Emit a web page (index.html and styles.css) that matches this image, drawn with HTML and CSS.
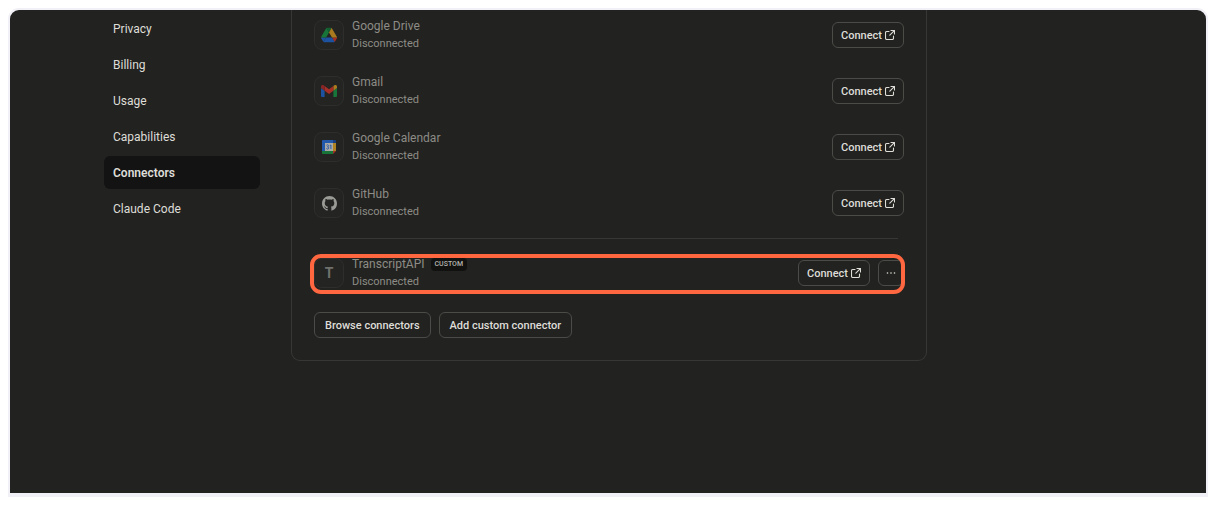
FILE: index.html
```html
<!DOCTYPE html>
<html lang="en">
<head>
<meta charset="UTF-8" />
<meta name="viewport" content="width=device-width, initial-scale=1" />
<title>Connectors</title>
<link rel="stylesheet" href="styles.css">
</head>
<body>
<svg class="sprite" aria-hidden="true">
<symbol id="external" viewBox="1 1 10 10">
<path d="M5 2.5H2.8C2 2.5 1.5 3 1.5 3.8v5.4c0 .8.5 1.3 1.3 1.3h5.4c.8 0 1.3-.5 1.3-1.3V7M7 1.5h3.5V5M10.3 1.7 5.8 6.2" fill="none" stroke="currentColor" stroke-width="1.1" stroke-linecap="round" stroke-linejoin="round" />
</symbol>
</svg>
<div class="frame">
<div class="layout">
<nav class="sidebar" aria-label="Settings">
<a href="#privacy">Privacy</a>
<a href="#billing">Billing</a>
<a href="#usage">Usage</a>
<a href="#capabilities">Capabilities</a>
<a href="#connectors" class="active" aria-current="page">Connectors</a>
<a href="#claude-code">Claude Code</a>
</nav>
<main class="card">
<div class="connectors">
<div class="connector">
<div class="icon">
<svg width="16" height="16" viewBox="0 0 87 78" aria-hidden="true">
<path d="m6.6 66.85 3.85 6.65c.8 1.4 1.95 2.5 3.3 3.3l13.75-23.8H0c0 1.55.4 3.1 1.2 4.5z" fill="#1c52a0" />
<path d="M43.65 25 29.9 1.2c-1.35.8-2.5 1.9-3.3 3.3L1.2 48.5A9 9 0 0 0 0 53h27.5z" fill="#187539" />
<path d="M73.55 76.8c1.35-.8 2.5-1.9 3.3-3.3l9.25-16c.8-1.4 1.2-2.95 1.2-4.5H59.8l5.85 11.5z" fill="#a52f26" />
<path d="M43.65 25 57.4 1.2C56.05.4 54.5 0 52.9 0H34.4c-1.6 0-3.15.45-4.5 1.2z" fill="#126030" />
<path d="M59.8 53H27.5L13.75 76.8c1.35.8 2.9 1.2 4.5 1.2h50.8c1.6 0 3.15-.45 4.5-1.2z" fill="#1c52a0" />
<path d="m73.4 26.5-12.7-22c-.8-1.4-1.95-2.5-3.3-3.3L43.65 25 59.8 53h27.45c0-1.55-.4-3.1-1.2-4.5z" fill="#a97a1e" />
</svg>
</div>
<div class="info">
<div class="name">Google Drive</div>
<div class="status">Disconnected</div>
</div>
<button type="button">Connect <svg width="10" height="10" aria-hidden="true"><use href="#external" /></svg></button>
</div>
<div class="connector">
<div class="icon">
<svg width="16" height="16" viewBox="0 0 88 66" aria-hidden="true">
<path d="M6 66h14V32L0 17v43a6 6 0 0 0 6 6" fill="#1c52a0" />
<path d="M68 66h14a6 6 0 0 0 6-6V17L68 32" fill="#187539" />
<path d="M68 6v26l20-15V9c0-7.400-8.470-11.640-14.400-7.200" fill="#a97a1e" />
<path d="M20 32V6l24 18L68 6v26L44 50" fill="#a52f26" />
<path d="M0 9v8l20 15V6l-5.600-4.200C8.460-2.640 0 1.600 0 9" fill="#8a2525" />
</svg>
</div>
<div class="info">
<div class="name">Gmail</div>
<div class="status">Disconnected</div>
</div>
<button type="button">Connect <svg width="10" height="10" aria-hidden="true"><use href="#external" /></svg></button>
</div>
<div class="connector">
<div class="icon">
<svg width="16" height="16" viewBox="0 0 16 16" aria-hidden="true">
<path d="M2 1h10v3H4v8H1V2c0-.6.4-1 1-1" fill="#2259ab" />
<path d="M12 1h2c.6 0 1 .4 1 1v2h-3z" fill="#173f80" />
<path d="M12 4h3v8h-3z" fill="#b08322" />
<path d="M1 12h11v3H2c-.6 0-1-.4-1-1z" fill="#187539" />
<path d="M12 12h3l-3 3z" fill="#a52f26" />
<path d="M4 4h8v8H4z" fill="#a9a9a6" />
<path d="M5.500 6.300c.5-.8 2-.7 2 .4 0 .8-.6 1.100-1.100 1.100.6 0 1.300.3 1.300 1.200 0 1.300-1.800 1.400-2.400.4M8.800 6.700l1.100-.7v4" fill="none" stroke="#2259ab" stroke-width=".9" />
</svg>
</div>
<div class="info">
<div class="name">Google Calendar</div>
<div class="status">Disconnected</div>
</div>
<button type="button">Connect <svg width="10" height="10" aria-hidden="true"><use href="#external" /></svg></button>
</div>
<div class="connector">
<div class="icon">
<svg width="15" height="15" viewBox="0 0 16 16" aria-hidden="true">
<path d="M8 0C3.580 0 0 3.580 0 8c0 3.540 2.290 6.530 5.470 7.590.4.070.55-.17.55-.38 0-.19-.01-.82-.01-1.490-2.010.37-2.530-.49-2.690-.94-.09-.23-.48-.94-.82-1.130-.28-.15-.68-.52-.01-.53.63-.01 1.080.58 1.230.82.72 1.210 1.870.87 2.330.66.070-.52.28-.87.51-1.070-1.780-.2-3.640-.89-3.640-3.950 0-.87.31-1.590.82-2.150-.08-.2-.36-1.020.08-2.120 0 0 .67-.21 2.200.82.64-.18 1.320-.27 2-.27s1.360.09 2 .27c1.530-1.040 2.200-.82 2.200-.82.44 1.100.16 1.920.08 2.120.51.56.82 1.270.82 2.150 0 3.070-1.870 3.750-3.650 3.950.29.25.54.73.54 1.480 0 1.070-.01 1.930-.01 2.200 0 .21.15.46.55.38A8.010 8.010 0 0 0 16 8c0-4.420-3.580-8-8-8" fill="#9a9a97" />
</svg>
</div>
<div class="info">
<div class="name">GitHub</div>
<div class="status">Disconnected</div>
</div>
<button type="button">Connect <svg width="10" height="10" aria-hidden="true"><use href="#external" /></svg></button>
</div>
</div>
<hr>
<div class="connector highlight">
<div class="icon letter">T</div>
<div class="info">
<div class="name">TranscriptAPI <span class="badge">CUSTOM</span></div>
<div class="status">Disconnected</div>
</div>
<button type="button">Connect <svg width="10" height="10" aria-hidden="true"><use href="#external" /></svg></button>
<button type="button" class="more" aria-label="More options">
<svg width="10" height="10" viewBox="0 0 10 10" fill="currentColor" aria-hidden="true"><circle cx="1.500" cy="5" r=".8" /><circle cx="5" cy="5" r=".8" /><circle cx="8.500" cy="5" r=".8" /></svg>
</button>
</div>
<div class="actions">
<button type="button">Browse connectors</button>
<button type="button">Add custom connector</button>
</div>
</main>
</div>
</div>
</body>
</html>
```

FILE: styles.css
```css
:root {
--bg-color: #222220;
--active-bg: #131313;
--line: #373735;
--button-line: #4b4b48;
--text-color: #deddd8;
--muted: #8d8c86;
--accent: #ff6740;
--font-family: Roboto, "Liberation Sans", Arial, sans-serif;
}
* {
box-sizing: border-box;
}
body {
margin: 8px;
background: #fff;
color: var(--text-color);
font-family: var(--font-family);
font-size: 12px;
line-height: 18px;
}
.sprite {
display: none;
}
.frame {
min-height: calc(100vh - 16px);
background: var(--bg-color);
border: 2px solid #f1f0f6;
border-bottom-width: 4px;
border-radius: 11px 11px 0 0;
}
.layout {
max-width: 1008px;
margin: 0 auto;
display: grid;
grid-template-columns: 156px minmax(0, 636px);
gap: 31px;
align-items: start;
}
.sidebar {
display: grid;
gap: 3px;
padding-top: 2px;
}
.sidebar a {
padding: 8px 9px 7px;
border-radius: 6px;
color: inherit;
text-decoration: none;
}
.sidebar .active {
background: var(--active-bg);
font-weight: 600;
}
.card {
padding: 7px 22px 22px;
border: 1px solid var(--line);
border-top: none;
border-radius: 0 0 9px 9px;
}
.connectors {
display: grid;
gap: 20px;
}
.connector {
display: flex;
align-items: center;
gap: 8px;
}
.icon {
width: 30px;
height: 30px;
display: grid;
place-items: center;
background: #242422;
border: 1px solid #2e2e2c;
border-radius: 8px;
}
.letter {
color: #70706c;
font-size: 14px;
font-weight: 700;
}
.info {
flex: 1;
color: var(--muted);
}
.name {
display: flex;
align-items: center;
gap: 6px;
}
.status {
font-size: 11px;
}
.badge {
padding: 0 4px;
background: #111110;
border-radius: 4px;
color: #b5b4ae;
font-size: 7px;
font-weight: 500;
line-height: 13px;
}
button {
height: 26px;
display: flex;
align-items: center;
gap: 3px;
padding: 0 8px;
background: transparent;
border: 1px solid var(--button-line);
border-radius: 6px;
color: var(--text-color);
font-family: inherit;
font-size: 11px;
font-weight: 500;
cursor: pointer;
}
button:hover {
background: var(--active-bg);
}
hr {
margin: 17px 6px 16px;
border: none;
border-top: 1px solid var(--line);
}
.highlight {
position: relative;
}
.highlight::after {
content: "";
position: absolute;
inset: -1px -1px -3px -4px;
border: 4px solid var(--accent);
border-radius: 11px;
pointer-events: none;
}
.more {
width: 26px;
justify-content: center;
padding: 0;
}
.actions {
display: flex;
gap: 8px;
margin-top: 21px;
}
.actions button {
padding: 0 10px;
}
@media (max-width: 700px) {
.layout {
grid-template-columns: 1fr;
padding: 0 12px 12px;
}
}
```
